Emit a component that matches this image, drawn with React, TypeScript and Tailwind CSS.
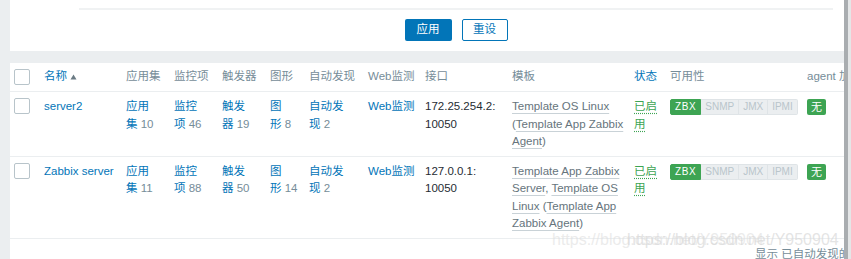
import React from 'react';

const blue = 'text-[#0275b8]';
const gray = 'text-[#768d99]';

const Count = ({ a, b, n }: { a: string; b: string; n: string }) => (
  <div>
    <span className={blue}>
      {a}
      <br />
      {b}
    </span>{' '}
    <span className={gray}>{n}</span>
  </div>
);

const Tpl = ({ children }: { children: React.ReactNode }) => (
  <span className="underline decoration-[#c9d2d7] underline-offset-[3px]">{children}</span>
);

const Enabled = () => (
  <div className="text-[#3da453] underline decoration-dotted decoration-[#3da453] underline-offset-[3px]">
    已启
    <br />
    用
  </div>
);

const Avail = () => (
  <div className="mt-px flex text-[10px] leading-[14px]">
    <span className="rounded-l-[2px] border border-[#3da453] bg-[#3da453] px-[4px] tracking-[0.6px] text-white">ZBX</span>
    <span className="border-y border-r border-[#dfe4e7] bg-[#ebeef0] px-[4px] text-[#b9c5cb]">SNMP</span>
    <span className="border-y border-r border-[#dfe4e7] bg-[#ebeef0] px-[4px] text-[#b9c5cb]">JMX</span>
    <span className="rounded-r-[2px] border-y border-r border-[#dfe4e7] bg-[#ebeef0] px-[4px] text-[#b9c5cb]">IPMI</span>
  </div>
);

const Encrypt = () => (
  <div className="mt-px flex">
    <span className="rounded-[2px] bg-[#3da453] px-[4px] text-[11px] leading-[16px] text-white">无</span>
  </div>
);

const Check = () => <div className="h-[16px] w-[16px] rounded-[2px] border border-[#b8c4ca] bg-white" />;

const cols =
  'grid grid-cols-[30px_82px_48px_48px_48px_39px_59px_57px_87px_122px_36px_137px_1fr] pl-[4px] whitespace-nowrap';

export default function App() {
  return (
    <div className="relative flex h-[259px] w-[851px] overflow-hidden bg-[#ebeef0] font-['Liberation_Sans','Noto_Sans_CJK_SC',sans-serif] text-[11.5px] leading-[17.5px] text-[#1f2c33]">
      <div className="flex w-[844px] flex-col pl-[10px]">
        {/* filter footer */}
        <div className="h-[51px] bg-white">
          <div className="ml-[69px] mr-[11px] pt-[8px]">
            <div className="h-[2px] bg-[#f0f2f3]" />
            <div className="mt-[9px] flex justify-center gap-[10px]">
              <button className="h-[22px] w-[47px] rounded-[2px] bg-[#0275b8] text-[11.5px] text-white">应用</button>
              <button className="h-[22px] w-[46px] rounded-[2px] border border-[#0275b8] bg-white text-[11.5px] text-[#0275b8]">
                重设
              </button>
            </div>
          </div>
        </div>

        {/* hosts table */}
        <div className="mt-[12px] flex-1 overflow-hidden bg-white">
          <div className={`${cols} h-[29px] items-center border-b border-[#ebeef0] ${gray}`}>
            <Check />
            <div className={`flex items-center ${blue}`}>
              名称
              <svg width="7" height="6" viewBox="0 0 7 6" className="ml-[3px]">
                <path d="M3.5 0.5 L6.5 5.5 L0.5 5.5 Z" fill="#6b7b84" />
              </svg>
            </div>
            <div>应用集</div>
            <div>监控项</div>
            <div>触发器</div>
            <div>图形</div>
            <div>自动发现</div>
            <div>Web监测</div>
            <div>接口</div>
            <div>模板</div>
            <div className={blue}>状态</div>
            <div>可用性</div>
            <div>agent 加密</div>
          </div>

          <div className={`${cols} items-start border-b border-[#ebeef0] pb-[5px] pt-[6px]`}>
            <Check />
            <div className={blue}>server2</div>
            <Count a="应用" b="集" n="10" />
            <Count a="监控" b="项" n="46" />
            <Count a="触发" b="器" n="19" />
            <Count a="图" b="形" n="8" />
            <Count a="自动发" b="现" n="2" />
            <div className={blue}>Web监测</div>
            <div>
              172.25.254.2:
              <br />
              10050
            </div>
            <div className="text-[#66747c]">
              <Tpl>Template OS Linux</Tpl>
              <br />(<Tpl>Template App Zabbix</Tpl>
              <br />
              <Tpl>Agent</Tpl>)
            </div>
            <Enabled />
            <Avail />
            <Encrypt />
          </div>

          <div className={`${cols} items-start border-b border-[#ebeef0] pb-[5px] pt-[6px]`}>
            <Check />
            <div className={blue}>Zabbix server</div>
            <Count a="应用" b="集" n="11" />
            <Count a="监控" b="项" n="88" />
            <Count a="触发" b="器" n="50" />
            <Count a="图" b="形" n="14" />
            <Count a="自动发" b="现" n="2" />
            <div className={blue}>Web监测</div>
            <div>
              127.0.0.1:
              <br />
              10050
            </div>
            <div className="text-[#66747c]">
              <Tpl>Template App Zabbix</Tpl>
              <br />
              <Tpl>Server</Tpl>, <Tpl>Template OS</Tpl>
              <br />
              <Tpl>Linux</Tpl> (<Tpl>Template App</Tpl>
              <br />
              <Tpl>Zabbix Agent</Tpl>)
            </div>
            <Enabled />
            <Avail />
            <Encrypt />
          </div>

          <div className={`whitespace-nowrap pl-[745px] pt-[7px] ${gray}`}>显示 已自动发现的 2 中的 2</div>
        </div>
      </div>

      {/* window scrollbar */}
      <div className="flex w-[7px]">
        <div className="w-[4px] bg-[#a9adb0]" />
        <div className="w-[3px] bg-[#e4e6e7]" />
      </div>

      {/* blog watermark */}
      <div className="pointer-events-none absolute left-[552px] top-[231px] whitespace-nowrap text-[16px] text-[#dedede]/60">
        https://blog.csdn.net/Y950904
      </div>
      <div className="pointer-events-none absolute left-[627px] top-[231px] whitespace-nowrap text-[16px] text-[#d8d8d8]/70">
        https://blog.csdn.net/Y950904
      </div>
    </div>
  );
}
